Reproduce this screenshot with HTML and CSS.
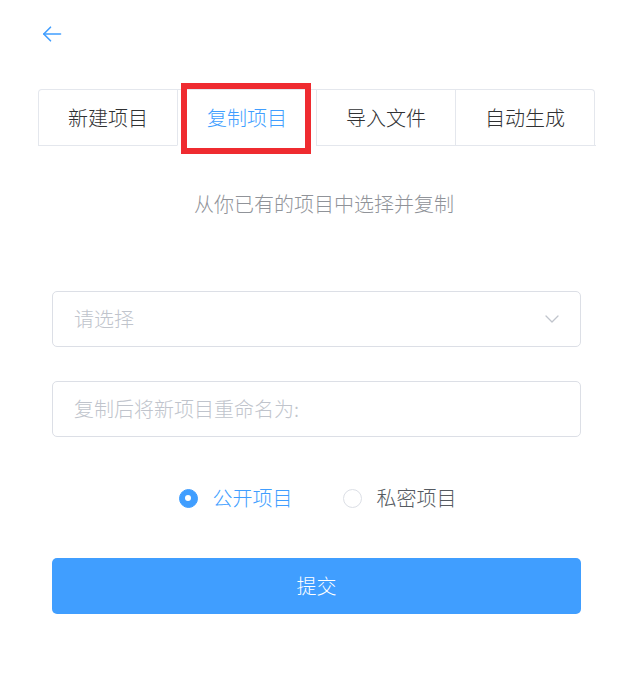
FILE: index.html
```html
<!DOCTYPE html>
<html lang="zh-CN">
<head>
<meta charset="utf-8">
<title>复制项目</title>
<link rel="stylesheet" href="styles.css">
</head>
<body>
<div class="page">
  <header class="topbar">
    <button class="back" type="button" aria-label="返回">
      <svg width="20" height="20" viewBox="0 0 20 20" fill="none" stroke="#409eff" stroke-width="1.6" stroke-linecap="round" stroke-linejoin="round">
        <path d="M18.5 10H1.8"/>
        <path d="M8.5 3.2L1.8 10L8.5 16.8"/>
      </svg>
    </button>
  </header>

  <nav class="tabs">
    <div class="tab-list">
      <div class="tab">新建项目</div>
      <div class="tab active">复制项目<span class="highlight"></span></div>
      <div class="tab">导入文件</div>
      <div class="tab">自动生成</div>
    </div>
  </nav>

  <p class="subtitle">从你已有的项目中选择并复制</p>

  <form class="form">
    <div class="field select">
      <span class="placeholder">请选择</span>
      <svg class="chevron" width="14" height="8" viewBox="0 0 14 8" fill="none" stroke="#c0c4cc" stroke-width="1.3" stroke-linecap="round" stroke-linejoin="round">
        <path d="M1 1L7 7L13 1"/>
      </svg>
    </div>
    <div class="field">
      <span class="placeholder">复制后将新项目重命名为:</span>
    </div>

    <div class="radios">
      <label class="radio checked"><span class="dot"></span><span class="radio-label">公开项目</span></label>
      <label class="radio"><span class="dot"></span><span class="radio-label">私密项目</span></label>
    </div>

    <button class="submit" type="button">提交</button>
  </form>
</div>
</body>
</html>
```

FILE: styles.css
```css
* { box-sizing: border-box; }

html, body {
  margin: 0;
  background: #ffffff;
}

body {
  font-family: "Noto Sans CJK SC", "Microsoft YaHei", sans-serif;
  font-weight: 300;
  color: #303133;
}

.page {
  padding-top: 24px;
}

.topbar {
  height: 20px;
  padding-left: 42px;
}

.back {
  display: block;
  width: 20px;
  height: 20px;
  padding: 0;
  border: 0;
  background: none;
}

.back svg { display: block; }

.tabs {
  margin: 45px 32px 0 38px;
  border-bottom: 1px solid #e4e7ed;
}

.tab-list {
  display: inline-flex;
  border: 1px solid #e4e7ed;
  border-bottom: none;
  border-radius: 4px 4px 0 0;
  margin-bottom: -1px;
}

.tab {
  position: relative;
  height: 56px;
  padding: 0 29px;
  font-size: 20px;
  line-height: 56px;
  color: #303133;
  border-left: 1px solid #e4e7ed;
  border-bottom: 1px solid #e4e7ed;
  white-space: nowrap;
}

.tab:first-child { border-left: none; }

.tab.active {
  color: #409eff;
  border-bottom-color: #ffffff;
}

.highlight {
  position: absolute;
  left: 3px;
  top: -7px;
  width: 130px;
  height: 71px;
  border: 6px solid #ef2b30;
}

.subtitle {
  margin: 44px 0 0;
  padding-left: 20px;
  text-align: center;
  font-size: 20px;
  line-height: 28px;
  color: #909399;
}

.form {
  margin: 73px 47px 0 52px;
}

.field {
  display: flex;
  align-items: center;
  justify-content: space-between;
  height: 56px;
  padding: 0 21px 0 21px;
  border: 1px solid #dcdfe6;
  border-radius: 5px;
  background: #fff;
}

.field + .field { margin-top: 34px; }

.placeholder {
  font-size: 20px;
  line-height: 28px;
  color: #c0c4cc;
}

.chevron {
  display: block;
}

.radios {
  display: flex;
  justify-content: center;
  gap: 50px;
  margin-top: 47px;
  height: 28px;
  padding-left: 2px;
}

.radio {
  display: flex;
  align-items: center;
  gap: 15px;
  font-size: 20px;
  line-height: 28px;
  color: #555a61;
}

.dot {
  display: block;
  width: 19px;
  height: 19px;
  border-radius: 50%;
  border: 1px solid #dcdfe6;
  background: #fff;
}

.radio.checked { color: #409eff; }

.radio.checked .dot {
  border-color: #409eff;
  background: #409eff;
  position: relative;
}

.radio.checked .dot::after {
  content: "";
  position: absolute;
  left: 50%;
  top: 50%;
  width: 6px;
  height: 6px;
  margin: -3px 0 0 -3px;
  border-radius: 50%;
  background: #fff;
}

.submit {
  display: block;
  width: 100%;
  height: 56px;
  margin-top: 46px;
  border: 0;
  border-radius: 5px;
  background: #409eff;
  color: #ffffff;
  font-family: inherit;
  font-weight: 300;
  font-size: 20px;
  line-height: 28px;
}
```
